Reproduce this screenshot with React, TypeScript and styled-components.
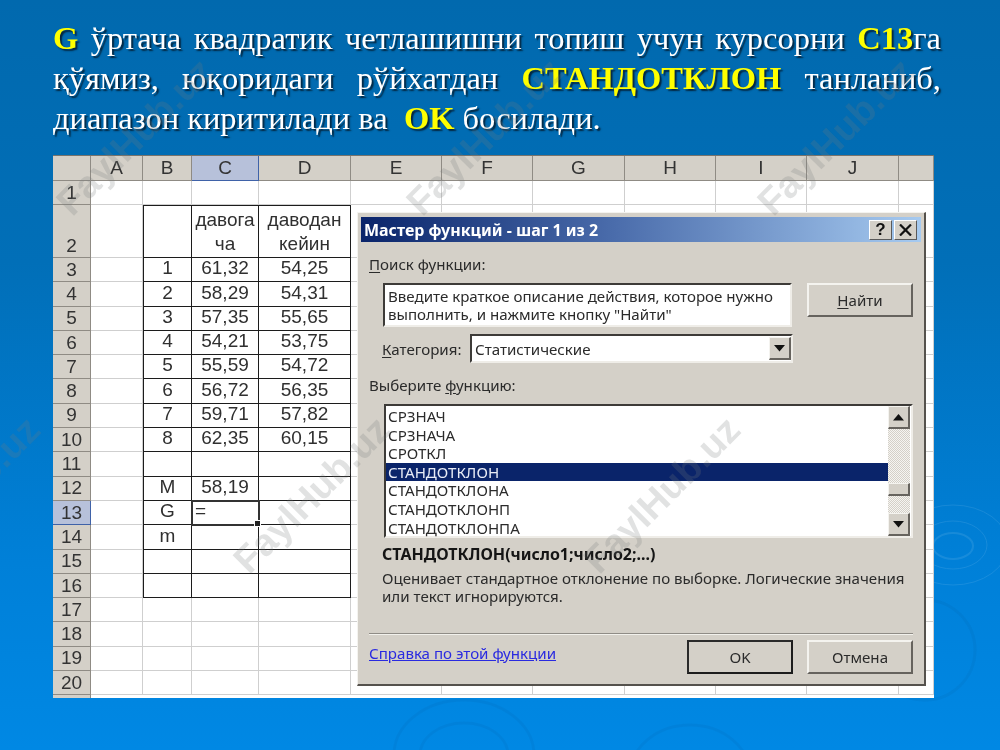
import styled, { createGlobalStyle } from "styled-components";

const GlobalStyle = createGlobalStyle`
  html, body {
    margin: 0;
    padding: 0;
    background: #0078c8;
  }
`;

const COLUMNS = ["A", "B", "C", "D", "E", "F", "G", "H", "I", "J", ""];
const COLUMN_WIDTHS = "38px 52px 49px 67px 92px 91px 91px 92px 91px 91px 92px 35px";
const ROW_TEMPLATE = `25px 24px 53px repeat(18, 24.3px) 10px`;

const TABLE: Record<number, [string, string, string]> = {
  2: ["", "давога ча", "даводан кейин"],
  3: ["1", "61,32", "54,25"],
  4: ["2", "58,29", "54,31"],
  5: ["3", "57,35", "55,65"],
  6: ["4", "54,21", "53,75"],
  7: ["5", "55,59", "54,72"],
  8: ["6", "56,72", "56,35"],
  9: ["7", "59,71", "57,82"],
  10: ["8", "62,35", "60,15"],
  11: ["", "", ""],
  12: ["M", "58,19", ""],
  13: ["G", "=", ""],
  14: ["m", "", ""],
  15: ["", "", ""],
  16: ["", "", ""],
};

const FUNCTIONS = [
  "СРЗНАЧ",
  "СРЗНАЧА",
  "СРОТКЛ",
  "СТАНДОТКЛОН",
  "СТАНДОТКЛОНА",
  "СТАНДОТКЛОНП",
  "СТАНДОТКЛОНПА",
];

const WATERMARKS = [
  [135, 137],
  [485, 137],
  [836, 137],
  [-38, 495],
  [312, 495],
  [662, 495],
];

const Slide = styled.div`
  position: relative;
  width: 1000px;
  height: 750px;
  overflow: hidden;
  box-sizing: border-box;
  padding: 18px 59px 0 53px;
  background: linear-gradient(180deg, #0169ae 0%, #016fb8 35%, #0080d8 75%, #0088e4 100%);
  filter: blur(0.45px);
`;

const Ripples = styled.svg`
  position: absolute;
  left: 0;
  top: 0;
`;

const Heading = styled.div`
  position: relative;
  font-family: "Liberation Serif", "Times New Roman", serif;
  font-size: 32.5px;
  line-height: 40px;
  color: #ffffff;
  text-shadow: 2px 2px 1.5px #04263f;
`;

const HeadingLine = styled.div<{ $last?: boolean }>`
  text-align: ${({ $last }) => ($last ? "left" : "justify")};
  text-align-last: ${({ $last }) => ($last ? "left" : "justify")};
  white-space: nowrap;
`;

const Mark = styled.b`
  color: #ffff00;
`;

const Sheet = styled.div`
  position: relative;
  display: grid;
  grid-template-columns: ${COLUMN_WIDTHS};
  grid-template-rows: ${ROW_TEMPLATE};
  width: 881px;
  height: 543px;
  margin-top: 17px;
  overflow: hidden;
  background: #ffffff;
  font-family: "Liberation Sans", Arial, sans-serif;
  font-size: 19px;
  color: #303030;
  border-top: 1px solid #77736c;
  box-sizing: border-box;
`;

const HeadCell = styled.div<{ $active?: boolean; $bottomText?: boolean }>`
  display: flex;
  justify-content: center;
  align-items: ${({ $bottomText }) => ($bottomText ? "flex-end" : "center")};
  box-sizing: border-box;
  background: ${({ $active }) => ($active ? "#b7c1da" : "#d4d0c8")};
  border-right: 1px solid ${({ $active }) => ($active ? "#3f62a8" : "#8f8b84")};
  border-bottom: 1px solid ${({ $active }) => ($active ? "#3f62a8" : "#8f8b84")};
  color: #333333;
`;

const Cell = styled.div<{ $boxed?: boolean; $left?: boolean; $top?: boolean; $wrap?: boolean }>`
  display: flex;
  align-items: flex-end;
  justify-content: center;
  padding-bottom: 1px;
  box-sizing: border-box;
  text-align: center;
  line-height: 24px;
  white-space: ${({ $wrap }) => ($wrap ? "normal" : "nowrap")};
  border-right: ${({ $boxed }) => ($boxed ? "1.5px solid #1c1c1c" : "1.5px solid #cfcfcf")};
  border-bottom: ${({ $boxed }) => ($boxed ? "1.5px solid #1c1c1c" : "1.5px solid #cfcfcf")};
  border-left: ${({ $left }) => ($left ? "1.5px solid #1c1c1c" : "0")};
  border-top: ${({ $top }) => ($top ? "1.5px solid #1c1c1c" : "0")};
`;

const ActiveCell = styled(Cell)`
  position: relative;
  justify-content: flex-start;
  padding-left: 3px;
  outline: 2px solid #333333;
  outline-offset: -1px;
  z-index: 1;

  &::after {
    content: "";
    position: absolute;
    right: -3px;
    bottom: -3px;
    width: 5px;
    height: 5px;
    background: #222222;
    border: 1px solid #ffffff;
  }
`;

const Dialog = styled.div`
  position: absolute;
  left: 304px;
  top: 56px;
  z-index: 2;
  display: flex;
  flex-direction: column;
  box-sizing: border-box;
  width: 569px;
  height: 474px;
  padding: 4px 3px 0 4px;
  background: #d4d0c8;
  border-top: 1px solid #f4f3ef;
  border-left: 1px solid #f4f3ef;
  border-right: 2px solid #55524d;
  border-bottom: 2px solid #55524d;
  font-family: "Noto Sans", "Liberation Sans", sans-serif;
  font-size: 15.1px;
  color: #2b2b2b;
`;

const TitleBar = styled.div`
  display: flex;
  align-items: center;
  justify-content: space-between;
  flex: none;
  height: 25px;
  margin-left: -1px;
  padding: 0 4px 0 3px;
  background: linear-gradient(90deg, #0a246a 0%, #4a6cab 45%, #a6caf0 100%);
  color: #ffffff;
  font-weight: 700;
  font-size: 16px;
  white-space: nowrap;
`;

const TitleButtons = styled.div`
  display: flex;
  gap: 2px;
`;

const TitleButton = styled.div`
  display: flex;
  align-items: center;
  justify-content: center;
  box-sizing: border-box;
  width: 23px;
  height: 20px;
  background: #d4d0c8;
  border-top: 1px solid #ffffff;
  border-left: 1px solid #ffffff;
  border-right: 1px solid #5a5a5a;
  border-bottom: 1px solid #5a5a5a;
  color: #111111;
  font-family: "Liberation Sans", sans-serif;
  font-weight: 700;
  font-size: 17px;
`;

const Body = styled.div`
  display: flex;
  flex-direction: column;
  padding: 0 8px 0 7px;
`;

const Label = styled.div<{ $top: number }>`
  height: 18px;
  line-height: 18px;
  margin-top: ${({ $top }) => $top}px;
  white-space: nowrap;
`;

const Accel = styled.u`
  text-underline-offset: 2px;
`;

const SearchRow = styled.div`
  display: flex;
  justify-content: space-between;
  align-items: flex-start;
  margin-top: 10px;
`;

const SearchBox = styled.div`
  box-sizing: border-box;
  width: 409px;
  height: 44px;
  margin-left: 14px;
  padding: 2px 0 0 3px;
  background: #ffffff;
  border-top: 2px solid #3d3b38;
  border-left: 2px solid #3d3b38;
  border-right: 2px solid #efede8;
  border-bottom: 2px solid #efede8;
  line-height: 18px;
  white-space: nowrap;
`;

const PushButton = styled.div<{ $default?: boolean }>`
  display: flex;
  align-items: center;
  justify-content: center;
  box-sizing: border-box;
  width: 106px;
  height: 34px;
  background: #d4d0c8;
  border-top: 2px solid ${({ $default }) => ($default ? "#2a2a2a" : "#f4f3ef")};
  border-left: 2px solid ${({ $default }) => ($default ? "#2a2a2a" : "#f4f3ef")};
  border-right: 2px solid ${({ $default }) => ($default ? "#1c1c1c" : "#66635e")};
  border-bottom: 2px solid ${({ $default }) => ($default ? "#1c1c1c" : "#66635e")};
`;

const CategoryRow = styled.div`
  display: flex;
  align-items: center;
  height: 29px;
  margin-top: 7px;
  margin-left: 13px;
`;

const CategoryLabel = styled.div`
  width: 88px;
  white-space: nowrap;
`;

const Combo = styled.div`
  display: flex;
  align-items: center;
  justify-content: space-between;
  box-sizing: border-box;
  width: 323px;
  height: 29px;
  padding-left: 3px;
  background: #ffffff;
  border-top: 2px solid #3d3b38;
  border-left: 2px solid #3d3b38;
  border-right: 2px solid #efede8;
  border-bottom: 2px solid #efede8;
`;

const ScrollArrowButton = styled.div`
  display: flex;
  align-items: center;
  justify-content: center;
  flex: none;
  box-sizing: border-box;
  width: 22px;
  height: 23px;
  background: #d4d0c8;
  border-top: 1px solid #f4f3ef;
  border-left: 1px solid #f4f3ef;
  border-right: 2px solid #66635e;
  border-bottom: 2px solid #66635e;
`;

const ListBox = styled.div`
  display: flex;
  justify-content: space-between;
  box-sizing: border-box;
  width: 529px;
  height: 134px;
  margin-top: 10px;
  margin-left: 15px;
  background: #ffffff;
  border-top: 2px solid #3d3b38;
  border-left: 2px solid #3d3b38;
  border-right: 2px solid #efede8;
  border-bottom: 2px solid #efede8;
`;

const ListItems = styled.div`
  flex: 1;
  padding-top: 1px;
`;

const ListItem = styled.div<{ $selected?: boolean }>`
  height: 18.6px;
  line-height: 18.6px;
  padding-left: 2px;
  background: ${({ $selected }) => ($selected ? "#0a246a" : "transparent")};
  color: ${({ $selected }) => ($selected ? "#e8ecf6" : "#2b2b2b")};
`;

const ScrollBar = styled.div`
  display: flex;
  flex-direction: column;
  flex: none;
  width: 22px;
  margin-right: 1px;
`;

const ScrollTrack = styled.div<{ $height: number }>`
  height: ${({ $height }) => $height}px;
  background: repeating-conic-gradient(#d4d0c8 0 25%, #f6f5f2 0 50%) 0 0 / 2px 2px;
`;

const ScrollThumb = styled(ScrollArrowButton)`
  height: 13px;
`;

const Signature = styled.div`
  height: 18px;
  line-height: 18px;
  margin-top: 7px;
  margin-left: 13px;
  color: #151515;
  font-size: 16px;
  font-weight: 700;
  white-space: nowrap;
`;

const Description = styled.div`
  margin-top: 6px;
  margin-left: 13px;
  line-height: 18px;
  white-space: nowrap;
`;

const Separator = styled.div`
  height: 2px;
  margin-top: 28px;
  background: linear-gradient(180deg, #8f8c86 50%, #f2f1ec 50%);
`;

const Footer = styled.div`
  display: flex;
  align-items: center;
  gap: 14px;
  margin-top: 5px;
`;

const HelpLink = styled.a`
  margin-right: auto;
  margin-bottom: 8px;
  color: #2a2ae0;
  text-decoration: underline;
  white-space: nowrap;
`;

const Watermark = styled.div<{ $x: number; $y: number }>`
  position: absolute;
  left: ${({ $x }) => $x}px;
  top: ${({ $y }) => $y}px;
  z-index: 5;
  transform: translate(-50%, -50%) rotate(-45deg);
  font-family: "Liberation Sans", Arial, sans-serif;
  font-weight: 700;
  font-size: 38px;
  color: rgba(120, 122, 125, 0.22);
  white-space: nowrap;
`;

const Arrow = ({ up }: { up?: boolean }) => (
  <svg width="11" height="7" viewBox="0 0 11 7">
    <polygon points={up ? "5.5,0 11,6.5 0,6.5" : "0,0 11,0 5.5,6.5"} fill="#111111" />
  </svg>
);

const CloseGlyph = () => (
  <svg width="13" height="12" viewBox="0 0 13 12">
    <path d="M1 0.5 L12 11.5 M12 0.5 L1 11.5" stroke="#111111" strokeWidth="2.2" />
  </svg>
);

const renderRow = (row: number) => {
  const data = TABLE[row];
  const boxed = Boolean(data);
  const isTop = row === 2;
  return (
    <>
      <HeadCell key={`h${row}`} $active={row === 13} $bottomText={row === 2}>
        {row}
      </HeadCell>
      <Cell key={`a${row}`} />
      <Cell key={`b${row}`} $boxed={boxed} $left={boxed} $top={isTop}>
        {data?.[0]}
      </Cell>
      {row === 13 ? (
        <ActiveCell key={`c${row}`} $boxed>
          =
        </ActiveCell>
      ) : (
        <Cell key={`c${row}`} $boxed={boxed} $top={isTop} $wrap={isTop}>
          {data?.[1]}
        </Cell>
      )}
      <Cell key={`d${row}`} $boxed={boxed} $top={isTop} $wrap={isTop}>
        {data?.[2]}
      </Cell>
      {COLUMNS.slice(4).map((col) => (
        <Cell key={`${col || "k"}${row}`} />
      ))}
    </>
  );
};

export default function App() {
  const rows = Array.from({ length: 20 }, (_, i) => i + 1);

  return (
    <>
      <GlobalStyle />
      <Slide>
        <Ripples width="1000" height="750" viewBox="0 0 1000 750" fill="none">
          <g opacity="0.09" stroke="#ffffff">
            <ellipse cx="953" cy="545" rx="55" ry="40" />
            <ellipse cx="953" cy="545" rx="34" ry="24" />
            <ellipse cx="953" cy="546" rx="20" ry="13" strokeWidth="2" />
          </g>
          <g opacity="0.05" stroke="#002a55" strokeWidth="3">
            <ellipse cx="464" cy="755" rx="70" ry="55" />
            <ellipse cx="464" cy="755" rx="44" ry="32" />
            <ellipse cx="690" cy="775" rx="60" ry="50" />
            <ellipse cx="925" cy="650" rx="50" ry="50" />
          </g>
        </Ripples>

        <Heading>
          <HeadingLine>
            <Mark>G</Mark> ўртача квадратик четлашишни топиш учун курсорни <Mark>C13</Mark>га
          </HeadingLine>
          <HeadingLine>
            қўямиз, юқоридаги рўйхатдан <Mark>СТАНДОТКЛОН</Mark> танланиб,
          </HeadingLine>
          <HeadingLine $last>
            диапазон киритилади ва&nbsp; <Mark>OK</Mark> босилади.
          </HeadingLine>
        </Heading>

        <Sheet>
          <HeadCell />
          {COLUMNS.map((col, i) => (
            <HeadCell key={`col${i}`} $active={col === "C"}>
              {col}
            </HeadCell>
          ))}
          {rows.map((row) => renderRow(row))}
          <HeadCell />

          <Dialog>
            <TitleBar>
              Мастер функций - шаг 1 из 2
              <TitleButtons>
                <TitleButton>?</TitleButton>
                <TitleButton>
                  <CloseGlyph />
                </TitleButton>
              </TitleButtons>
            </TitleBar>
            <Body>
              <Label $top={13}>
                <Accel>П</Accel>оиск функции:
              </Label>
              <SearchRow>
                <SearchBox>
                  Введите краткое описание действия, которое нужно
                  <br />
                  выполнить, и нажмите кнопку "Найти"
                </SearchBox>
                <PushButton>
                  <span>
                    <Accel>Н</Accel>айти
                  </span>
                </PushButton>
              </SearchRow>
              <CategoryRow>
                <CategoryLabel>
                  <Accel>К</Accel>атегория:
                </CategoryLabel>
                <Combo>
                  Статистические
                  <ScrollArrowButton>
                    <Arrow />
                  </ScrollArrowButton>
                </Combo>
              </CategoryRow>
              <Label $top={13}>
                Выберите <Accel>ф</Accel>ункцию:
              </Label>
              <ListBox>
                <ListItems>
                  {FUNCTIONS.map((name) => (
                    <ListItem key={name} $selected={name === "СТАНДОТКЛОН"}>
                      {name}
                    </ListItem>
                  ))}
                </ListItems>
                <ScrollBar>
                  <ScrollArrowButton>
                    <Arrow up />
                  </ScrollArrowButton>
                  <ScrollTrack $height={55} />
                  <ScrollThumb />
                  <ScrollTrack $height={18} />
                  <ScrollArrowButton>
                    <Arrow />
                  </ScrollArrowButton>
                </ScrollBar>
              </ListBox>
              <Signature>СТАНДОТКЛОН(число1;число2;...)</Signature>
              <Description>
                Оценивает стандартное отклонение по выборке. Логические значения
                <br />
                или текст игнорируются.
              </Description>
              <Separator />
              <Footer>
                <HelpLink>Справка по этой функции</HelpLink>
                <PushButton $default>OK</PushButton>
                <PushButton>Отмена</PushButton>
              </Footer>
            </Body>
          </Dialog>
        </Sheet>

        {WATERMARKS.map(([x, y]) => (
          <Watermark key={`${x}-${y}`} $x={x} $y={y}>
            FaylHub.uz
          </Watermark>
        ))}
      </Slide>
    </>
  );
}
